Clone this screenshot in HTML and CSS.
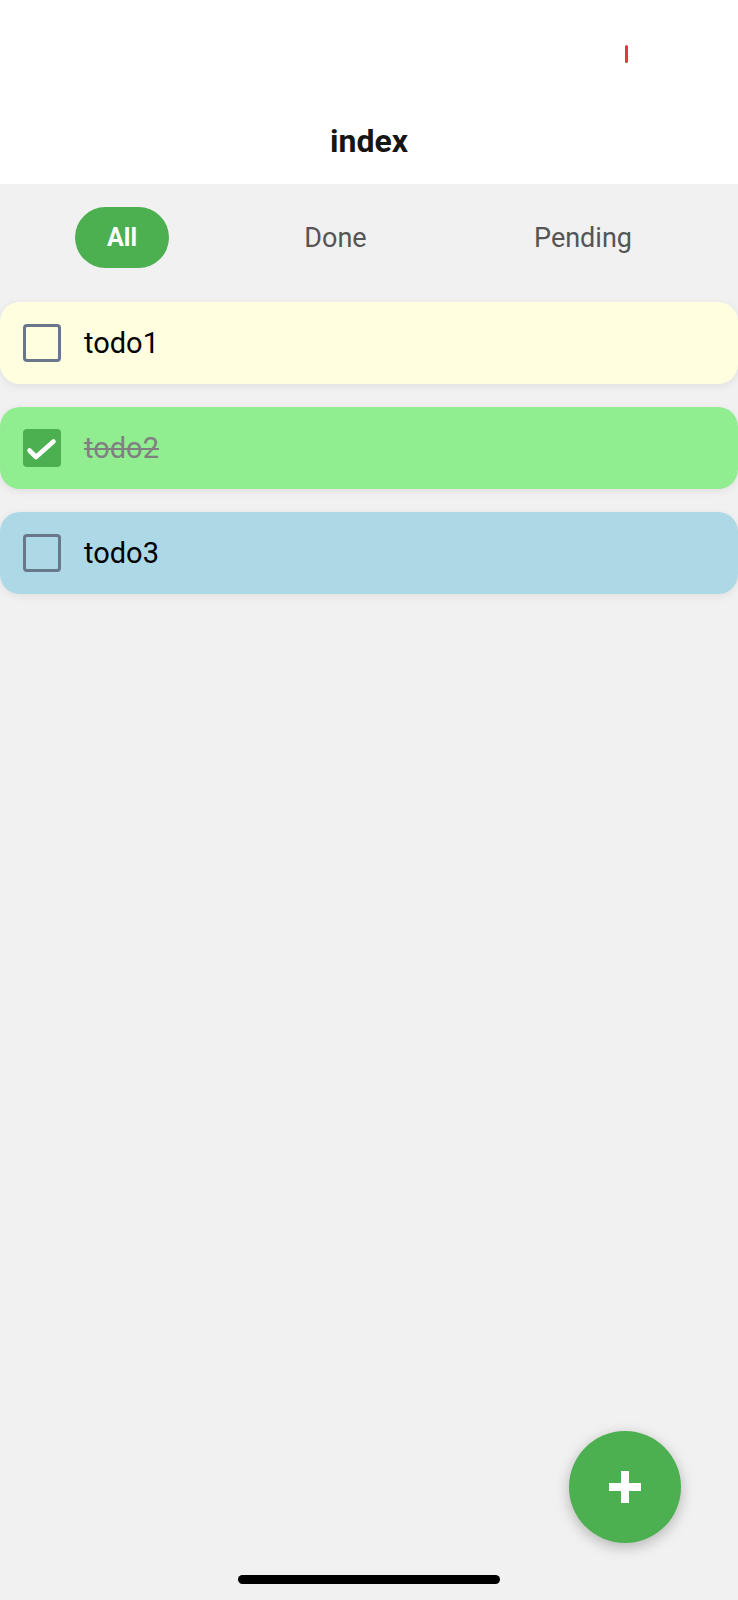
FILE: index.html
```html
<!DOCTYPE html>
<html lang="en">
<head>
<meta charset="utf-8">
<title>index</title>
<link rel="stylesheet" href="styles.css">
</head>
<body>
<div class="app">
  <header class="header">
    <span class="status-mark"></span>
    <h1 class="title">index</h1>
  </header>
  <nav class="filters">
    <button class="filter active">All</button>
    <button class="filter">Done</button>
    <button class="filter">Pending</button>
  </nav>
  <ul class="list">
    <li class="card yellow">
      <span class="check"></span>
      <span class="label">todo1</span>
    </li>
    <li class="card green">
      <span class="check checked">
        <svg viewBox="0 0 38 38" width="38" height="38"><path d="M6.5 21.5 L13 28 L30.5 12.5" fill="none" stroke="#fff" stroke-width="4.6" stroke-linecap="round" stroke-linejoin="round"/></svg>
      </span>
      <span class="label done">todo2</span>
    </li>
    <li class="card blue">
      <span class="check"></span>
      <span class="label">todo3</span>
    </li>
  </ul>
  <button class="fab" aria-label="Add">
    <svg viewBox="0 0 32 32" width="32" height="32"><path d="M12 0h8v12h12v8H20v12h-8V20H0v-8h12z" fill="#fff"/></svg>
  </button>
  <div class="home-indicator"></div>
</div>
</body>
</html>
```
FILE: styles.css
```css
* { box-sizing: border-box; }
html, body {
  margin: 0;
  padding: 0;
  height: 100%;
}
body {
  background: #f1f1f1;
  font-family: Roboto, "Liberation Sans", sans-serif;
}
.app {
  position: relative;
  min-height: 1600px;
}
.header {
  position: relative;
  height: 184px;
  background: #fff;
  display: flex;
  align-items: flex-end;
  justify-content: center;
  padding-bottom: 24px;
}
.status-mark {
  position: absolute;
  left: 625px;
  top: 45px;
  width: 3px;
  height: 18px;
  border-radius: 2px;
  background: #e03a3a;
}
.title {
  margin: 0;
  font-size: 32px;
  line-height: 38px;
  font-weight: 700;
  color: #151515;
}
.filters {
  display: flex;
  justify-content: space-between;
  align-items: center;
  padding: 23px 74px 0 75px;
}
.filter {
  height: 61px;
  padding: 0 32px;
  border: none;
  border-radius: 31px;
  background: transparent;
  font-family: Roboto, "Liberation Sans", sans-serif;
  font-size: 27px;
  font-weight: 400;
  color: #555;
}
.filter.active {
  background: #4caf50;
  color: #fff;
  font-size: 25px;
  font-weight: 700;
}
.list {
  list-style: none;
  margin: 34px 0 0;
  padding: 0;
  display: flex;
  flex-direction: column;
  gap: 23px;
}
.card {
  height: 82px;
  border-radius: 20px;
  display: flex;
  align-items: center;
  gap: 23px;
  padding-left: 23px;
  box-shadow: 0 2px 8px rgba(0, 0, 0, 0.08);
}
.yellow { background: #ffffe0; }
.green { background: #90ee90; }
.blue { background: #add8e6; }
.check {
  width: 38px;
  height: 38px;
  border: 3.5px solid #687789;
  border-radius: 4px;
  flex: none;
  display: flex;
}
.check.checked {
  border: none;
  background: #4caf50;
}
.label {
  font-size: 29px;
  color: #000;
}
.label.done {
  color: #808080;
  text-decoration: line-through;
}
.fab {
  position: absolute;
  left: 569px;
  top: 1431px;
  width: 112px;
  height: 112px;
  border-radius: 50%;
  border: none;
  background: #4caf50;
  box-shadow: 0 4px 14px rgba(0, 0, 0, 0.25);
  display: flex;
  align-items: center;
  justify-content: center;
  padding: 0;
}
.home-indicator {
  position: absolute;
  left: 238px;
  top: 1575px;
  width: 262px;
  height: 9px;
  border-radius: 5px;
  background: #000;
}
```
